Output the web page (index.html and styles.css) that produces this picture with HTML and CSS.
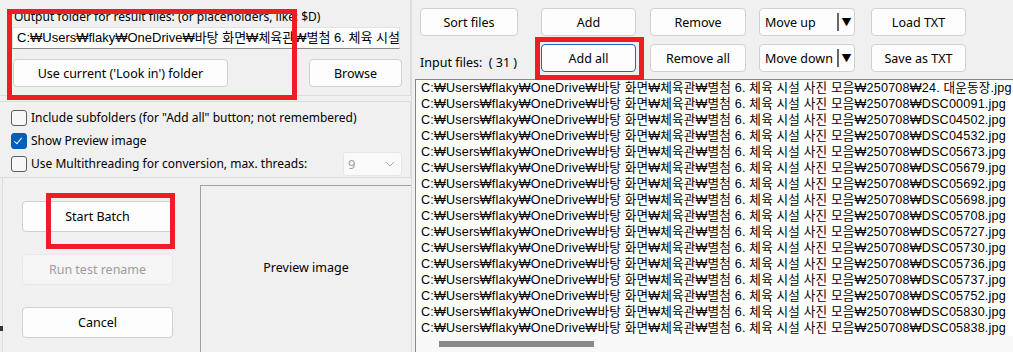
FILE: index.html
```html
<!DOCTYPE html>
<html lang="ko">
  <head>
    <meta charset="UTF-8" />
    <title>Batch rename</title>
    <link rel="stylesheet" href="styles.css">
  </head>
  <body>
    <div class="window">
      <div class="left">
        <!-- output folder -->
        <section class="grp grp-out">
          <div class="caption">Output folder for result files: (or placeholders, like: $D)</div>
          <div class="textbox">C:₩Users₩flaky₩OneDrive₩바탕 화면₩체육관₩별첨 6. 체육 시설</div>
          <div class="btn-row">
            <button class="btn btn-folder">Use current ('Look in') folder</button>
            <button class="btn btn-browse">Browse</button>
          </div>
          <div class="mark mark-out"></div>
        </section>

        <!-- options -->
        <section class="grp grp-opts">
          <label class="check"><span class="box"></span>Include subfolders (for "Add all" button; not remembered)</label>
          <label class="check"><span class="box on"></span>Show Preview image</label>
          <div class="check check-threads">
            <span class="box"></span>Use Multithreading for conversion, max. threads:
            <div class="combo">9<svg width="10" height="6" viewBox="0 0 10 6"><path d="M1 1l4 4 4-4" fill="none" stroke="#a8a8a8" stroke-width="1"/></svg></div>
          </div>
        </section>

        <!-- run -->
        <section class="grp grp-run">
          <div class="run-btns">
            <button class="btn btn-run">Start Batch</button>
            <button class="btn btn-run" disabled>Run test rename</button>
            <button class="btn btn-run">Cancel</button>
            <div class="mark mark-start"></div>
          </div>
          <div class="preview">Preview image</div>
          <span class="stub"></span>
        </section>
      </div>

      <div class="right">
        <div class="toolbar">
          <button class="btn b1">Sort files</button>
          <button class="btn b2">Add</button>
          <button class="btn b3">Remove</button>
          <button class="btn b4 split">Move up<span class="drop">&#9660;</span></button>
          <button class="btn b5">Load TXT</button>

          <div class="count">Input files:&nbsp;&nbsp;( 31 )</div>
          <button class="btn b2 focus">Add all<div class="mark mark-all"></div></button>
          <button class="btn b3">Remove all</button>
          <button class="btn b4 split">Move down<span class="drop">&#9660;</span></button>
          <button class="btn b5">Save as TXT</button>
        </div>

        <div class="list">
          <div class="rows">
            <div>C:₩Users₩flaky₩OneDrive₩바탕 화면₩체육관₩별첨 6. 체육 시설 사진 모음₩250708₩24. 대운동장.jpg</div>
            <div>C:₩Users₩flaky₩OneDrive₩바탕 화면₩체육관₩별첨 6. 체육 시설 사진 모음₩250708₩DSC00091.jpg</div>
            <div>C:₩Users₩flaky₩OneDrive₩바탕 화면₩체육관₩별첨 6. 체육 시설 사진 모음₩250708₩DSC04502.jpg</div>
            <div>C:₩Users₩flaky₩OneDrive₩바탕 화면₩체육관₩별첨 6. 체육 시설 사진 모음₩250708₩DSC04532.jpg</div>
            <div>C:₩Users₩flaky₩OneDrive₩바탕 화면₩체육관₩별첨 6. 체육 시설 사진 모음₩250708₩DSC05673.jpg</div>
            <div>C:₩Users₩flaky₩OneDrive₩바탕 화면₩체육관₩별첨 6. 체육 시설 사진 모음₩250708₩DSC05679.jpg</div>
            <div>C:₩Users₩flaky₩OneDrive₩바탕 화면₩체육관₩별첨 6. 체육 시설 사진 모음₩250708₩DSC05692.jpg</div>
            <div>C:₩Users₩flaky₩OneDrive₩바탕 화면₩체육관₩별첨 6. 체육 시설 사진 모음₩250708₩DSC05698.jpg</div>
            <div>C:₩Users₩flaky₩OneDrive₩바탕 화면₩체육관₩별첨 6. 체육 시설 사진 모음₩250708₩DSC05708.jpg</div>
            <div>C:₩Users₩flaky₩OneDrive₩바탕 화면₩체육관₩별첨 6. 체육 시설 사진 모음₩250708₩DSC05727.jpg</div>
            <div>C:₩Users₩flaky₩OneDrive₩바탕 화면₩체육관₩별첨 6. 체육 시설 사진 모음₩250708₩DSC05730.jpg</div>
            <div>C:₩Users₩flaky₩OneDrive₩바탕 화면₩체육관₩별첨 6. 체육 시설 사진 모음₩250708₩DSC05736.jpg</div>
            <div>C:₩Users₩flaky₩OneDrive₩바탕 화면₩체육관₩별첨 6. 체육 시설 사진 모음₩250708₩DSC05737.jpg</div>
            <div>C:₩Users₩flaky₩OneDrive₩바탕 화면₩체육관₩별첨 6. 체육 시설 사진 모음₩250708₩DSC05752.jpg</div>
            <div>C:₩Users₩flaky₩OneDrive₩바탕 화면₩체육관₩별첨 6. 체육 시설 사진 모음₩250708₩DSC05830.jpg</div>
            <div>C:₩Users₩flaky₩OneDrive₩바탕 화면₩체육관₩별첨 6. 체육 시설 사진 모음₩250708₩DSC05838.jpg</div>
          </div>
          <div class="hscroll"><div class="thumb"></div></div>
        </div>
      </div>
    </div>
  </body>
</html>
```

FILE: styles.css
```css
body {
  margin: 0;
  background-color: #f0f0f0;
  font-family: "Noto Sans", "Noto Sans CJK KR", sans-serif;
  font-size: 12px;
  color: #000;
}

.window {
  display: flex;
  width: 1013px;
  height: 352px;
  overflow: hidden;
}

/* left column */
.left {
  width: 411px;
  flex: none;
  display: flex;
  flex-direction: column;
}

.grp {
  position: relative;
  box-sizing: border-box;
}

.grp-out {
  height: 96px;
  padding: 9px 0 0 12px;
  border-bottom: 1px solid #dcdcdc;
  border-right: 1px solid #dcdcdc;
}

.caption {
  height: 16px;
  line-height: 16px;
  padding-left: 2px;
}

.textbox {
  width: 388px;
  height: 22px;
  margin-top: 2px;
  box-sizing: border-box;
  background-color: #fff;
  border: 1px solid #e2e2e2;
  border-bottom-color: #8a8a8a;
  padding-left: 4px;
  line-height: 20px;
  font-family: "Liberation Sans", "Noto Sans CJK KR", sans-serif;
  font-size: 13px;
  white-space: nowrap;
  overflow: hidden;
}

.btn-row {
  display: flex;
  justify-content: space-between;
  width: 390px;
  margin-top: 10px;
}

.btn {
  font-family: "Noto Sans", "Noto Sans CJK KR", sans-serif;
  font-size: 12.5px;
  color: #000;
  background-color: #fdfdfd;
  border: 1px solid #d0d0d0;
  border-radius: 4px;
  height: 28px;
  padding: 0;
  position: relative;
}

.btn:disabled {
  background-color: #f5f5f5;
  border-color: #e8e8e8;
  color: #9d9d9d;
}

.btn-folder {
  width: 215px;
  margin-left: 1px;
}

.btn-browse {
  width: 93px;
}

.mark {
  position: absolute;
  border: 5px solid #ee1c25;
  box-sizing: border-box;
  pointer-events: none;
}

.mark-out {
  left: 7px;
  top: 9px;
  width: 290px;
  height: 91px;
  z-index: 2;
}

/* options */
.grp-opts {
  height: 77px;
  margin-top: 5px;
  padding: 4px 0 0 11px;
  border-top: 1px solid #dcdcdc;
  border-bottom: 1px solid #dcdcdc;
  border-right: 1px solid #dcdcdc;
}

.check {
  display: flex;
  align-items: center;
  height: 23px;
}

.box {
  width: 14px;
  height: 14px;
  border: 1px solid #5c5c5c;
  border-radius: 3px;
  background-color: #f7f7f7;
  margin-right: 4px;
  flex: none;
  position: relative;
}

.box.on {
  background-color: #005fb8;
  border-color: #005fb8;
}

.box.on::after {
  content: "";
  position: absolute;
  left: 4px;
  top: 2px;
  width: 3px;
  height: 7px;
  border: solid #fff;
  border-width: 0 1px 1px 0;
  transform: rotate(40deg);
}

.combo {
  margin-left: auto;
  margin-right: 8px;
  width: 59px;
  height: 24px;
  box-sizing: border-box;
  border: 1px solid #e6e6e6;
  border-radius: 3px;
  background-color: #fafafa;
  color: #a0a0a0;
  display: flex;
  align-items: center;
  justify-content: space-between;
  padding: 0 6px 0 4px;
  font-size: 13px;
}

/* run */
.grp-run {
  flex: 1;
  display: flex;
  margin-left: 2px;
  border-left: 1px solid #dcdcdc;
}

.run-btns {
  position: relative;
  display: flex;
  flex-direction: column;
  gap: 22px;
  padding: 23px 0 0 19px;
  width: 151px;
}

.btn-run {
  width: 151px;
  height: 31px;
}

.mark-start {
  left: 43px;
  top: 15px;
  width: 129px;
  height: 56px;
}

.preview {
  margin: 7px 0 0 27px;
  flex: 1;
  border: 1px solid #a0a0a0;
  border-right: none;
  border-bottom: none;
  display: flex;
  align-items: center;
  justify-content: center;
  padding-bottom: 4px;
  font-size: 12.5px;
}

.stub {
  position: absolute;
  left: -3px;
  top: 148px;
  width: 3px;
  height: 5px;
  background-color: #333;
}

/* right column */
.right {
  flex: 1;
  display: flex;
  flex-direction: column;
  border-left: 1px solid #dcdcdc;
}

.toolbar {
  display: grid;
  grid-template-columns: 121px 109px 109px 112px 96px;
  grid-template-rows: 28px 29px;
  row-gap: 8px;
  padding: 8px 0 0 8px;
}

.b1 { width: 98px; }
.b2 { width: 95px; }
.b3 { width: 96px; }
.b4 { width: 96px; }
.b5 { width: 95px; }

.focus {
  border: 1.5px solid #1a66c4;
}

.mark-all {
  left: -7px;
  top: -8px;
  width: 109px;
  height: 43px;
}

.split {
  text-align: left;
  padding-left: 5px;
}

.split .drop {
  position: absolute;
  right: 0;
  top: 4px;
  bottom: 4px;
  width: 15px;
  border-left: 2px solid #666;
  font-size: 10px;
  line-height: 19px;
  text-align: center;
}

.count {
  align-self: end;
  padding-bottom: 2px;
  font-size: 12.5px;
}

.list {
  margin: 6px 0 0 3px;
  flex: 1;
  background-color: #fff;
  border-left: 1px solid #828790;
  border-top: 1px solid #828790;
  display: flex;
  flex-direction: column;
  overflow: hidden;
}

.rows {
  padding-left: 5px;
  font-family: "Liberation Sans", "Noto Sans CJK KR", sans-serif;
  font-size: 12.6px;
  letter-spacing: 0.18px;
  line-height: 16px;
  white-space: nowrap;
}

.hscroll {
  margin-top: auto;
  height: 16px;
  background-color: #f8f8f8;
  display: flex;
  align-items: center;
}

.thumb {
  margin-left: 23px;
  width: 155px;
  height: 6px;
  background-color: #8a8a8a;
}
```
